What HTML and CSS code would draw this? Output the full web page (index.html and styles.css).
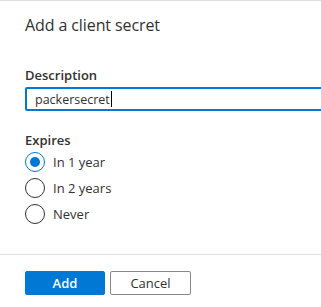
FILE: index.html
```html
<!DOCTYPE html>
<html lang="en">
<head>
    <meta charset="UTF-8">
    <title>Add a client secret</title>
    <link rel="stylesheet" href="styles.css">
</head>
<body>
    <div class="panel">
        <h1 class="panel-title">Add a client secret</h1>

        <div class="field">
            <label class="field-label" for="description">Description</label>
            <div class="text-input">
                <span class="text-value">packersecret</span><span class="caret"></span>
            </div>
        </div>

        <div class="field">
            <div class="field-label">Expires</div>
            <div class="radio-group">
                <div class="radio checked"><span class="radio-circle"></span>In 1 year</div>
                <div class="radio"><span class="radio-circle"></span>In 2 years</div>
                <div class="radio"><span class="radio-circle"></span>Never</div>
            </div>
        </div>
    </div>

    <div class="footer">
        <button class="btn btn-primary">Add</button>
        <button class="btn btn-default">Cancel</button>
    </div>
</body>
</html>
```

FILE: styles.css
```css
body {
    margin: 0;
    width: 321px;
    height: 307px;
    overflow: hidden;
    background-color: #fff;
    font-family: "Open Sans", "Noto Sans", sans-serif;
    color: #323130;
    border-top: 1px solid #e1dfdd;
    box-sizing: border-box;
}
.panel {
    padding: 12px 0 0 25px;
    height: 253px;
    box-sizing: border-box;
}
.panel-title {
    margin: 0;
    font-size: 16px;
    font-weight: 400;
    letter-spacing: -0.1px;
    line-height: 24px;
}
.field {
    margin-top: 28px;
}
.field + .field {
    margin-top: 19px;
}
.field-label {
    display: block;
    font-size: 13px;
    font-weight: 600;
    line-height: 20px;
    margin-bottom: 2px;
}
.text-input {
    width: 320px;
    height: 24px;
    border: 2px solid #0078d4;
    border-radius: 2px;
    box-sizing: border-box;
    padding: 0 8px;
    display: flex;
    align-items: center;
    font-size: 12.5px;
}
.caret {
    display: inline-block;
    width: 1px;
    height: 16px;
    margin-left: 1px;
    background-color: #000;
}
.radio-group {
    display: flex;
    flex-direction: column;
    gap: 6px;
    margin-top: 0;
}
.radio {
    display: flex;
    align-items: center;
    gap: 8px;
    font-size: 13px;
    height: 20px;
}
.radio-circle {
    width: 20px;
    height: 20px;
    border: 1px solid #323130;
    border-radius: 50%;
    box-sizing: border-box;
    display: flex;
    align-items: center;
    justify-content: center;
}
.radio.checked .radio-circle {
    border-color: #0078d4;
}
.radio.checked .radio-circle::after {
    content: "";
    width: 10px;
    height: 10px;
    border-radius: 50%;
    background-color: #0078d4;
}
.footer {
    border-top: 1px solid #e1dfdd;
    padding: 16px 25px 0;
    display: flex;
    gap: 5px;
}
.btn {
    width: 80px;
    height: 24px;
    font-family: inherit;
    font-size: 13px;
    border-radius: 2px;
    box-sizing: border-box;
    padding: 0;
}
.btn-primary {
    background-color: #0078d4;
    border: 1px solid #0078d4;
    color: #fff;
    font-weight: 600;
}
.btn-default {
    background-color: #fff;
    border: 1px solid #8a8886;
    color: #323130;
    width: 81px;
}
```
